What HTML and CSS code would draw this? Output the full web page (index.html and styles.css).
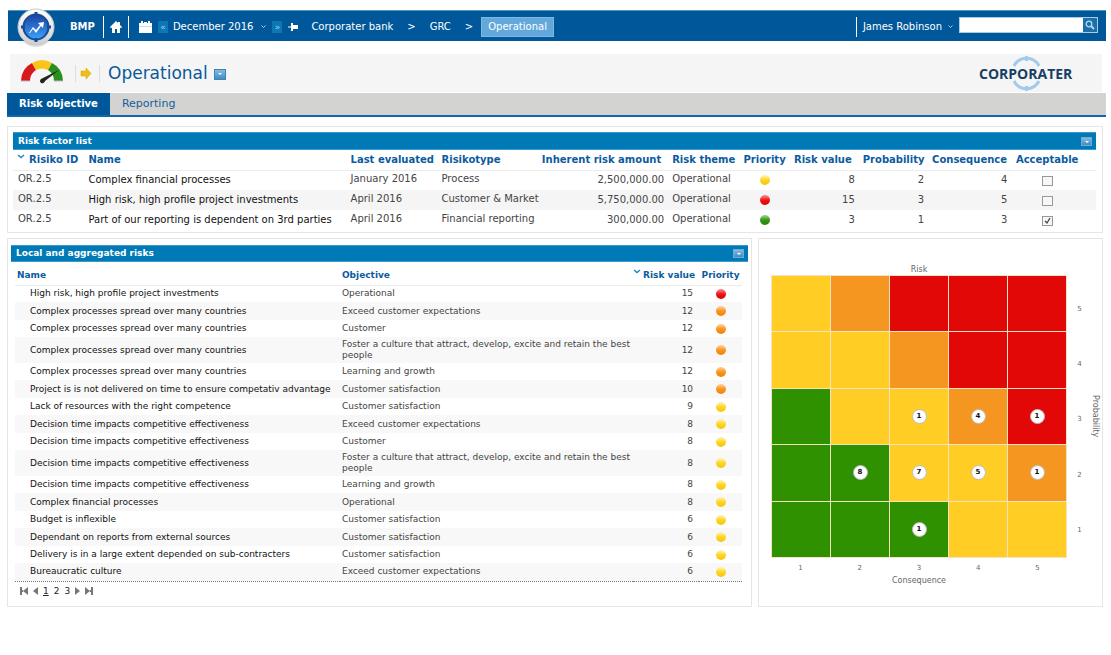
FILE: index.html
```html
<!DOCTYPE html>
<html lang="en">
<head>
<meta charset="utf-8">
<meta name="viewport" content="width=device-width, initial-scale=1">
<title>Operational</title>
<link rel="stylesheet" href="styles.css">
</head>
<body>
<header class="topbar">
  <a href="#" class="brand" aria-label="Start">
    <svg width="40" height="40" viewBox="0 0 40 40">
      <defs>
        <linearGradient id="ring" x1="0" y1="0" x2="0" y2="1"><stop offset="0" stop-color="#fff"/><stop offset="1" stop-color="#cfcfcf"/></linearGradient>
        <linearGradient id="ball" x1="0" y1="0" x2="0" y2="1"><stop offset="0" stop-color="#1743a4"/><stop offset="1" stop-color="#3fa2fa"/></linearGradient>
      </defs>
      <circle cx="20" cy="22" r="18" fill="#000" opacity=".12"/>
      <circle cx="20" cy="20" r="18" fill="url(#ring)" stroke="#c4c8cc"/>
      <circle cx="20" cy="20" r="12.500" fill="url(#ball)" stroke="#174c94" stroke-width="2"/>
      <path d="M20 5v4M20 31v4M5 20h4M31 20h4" stroke="#174c94" stroke-width="3"/>
      <path d="M13 26l4-6 3 3 4-5-2-2 6-1-1 6-2-2-5 7-3-4-3 4z" fill="#fff"/>
    </svg>
  </a>
  <a href="#" class="bmp">BMP</a>
  <a href="#" class="home" aria-label="Home">
    <svg width="12" height="12" viewBox="0 0 12 12"><path d="M6 0L0 6l1 1.200L2 6.500V12h3V8h2v4h3V6.500l1 .7L12 6l-2-2V1H8v1z" fill="#fff"/></svg>
  </a>
  <div class="period">
    <svg width="13" height="12" viewBox="0 0 13 12"><path d="M0 2h2V0h2v2h1V1h3v1h1V0h2v2h2v3H0zM0 6h13v6H0z" fill="#fff"/><path d="M0 5.500h13" stroke="#c8dcec"/></svg>
    <button class="step">«</button>
    <button class="month">December 2016
      <svg width="5" height="4" viewBox="0 0 5 4"><path d="M.5.5l2 2 2-2" fill="none" stroke="#a8cbe6"/></svg>
    </button>
    <button class="step">»</button>
    <svg width="11" height="8" viewBox="0 0 11 8"><path d="M0 4h4" stroke="#fff"/><path d="M3 0h2v2h5v4H5v2H3z" fill="#fff"/></svg>
  </div>
  <nav class="crumbs" aria-label="Breadcrumb">
    <a href="#">Corporater bank</a><span>&gt;</span><a href="#">GRC</a><span>&gt;</span><a href="#" class="current">Operational</a>
  </nav>
  <div class="account">
    <button class="user">James Robinson
      <svg width="5" height="4" viewBox="0 0 5 4"><path d="M.5.5l2 2 2-2" fill="none" stroke="#a8cbe6"/></svg>
    </button>
    <form class="search">
      <input type="text" aria-label="Search">
      <button type="button" aria-label="Search">
        <svg width="10" height="10" viewBox="0 0 10 10"><circle cx="4" cy="4" r="2.800" fill="none" stroke="#b5d8ee" stroke-width="1.300"/><path d="M6 6l3 3" stroke="#b5d8ee" stroke-width="1.800"/></svg>
      </button>
    </form>
  </div>
</header>

<section class="titlebar">
  <svg class="gauge" width="44" height="26" viewBox="0 0 44 26">
    <path d="M1 22A20.500 20.500 0 0 1 12 4l4 7A13 13 0 0 0 10 22z" fill="#d8191c"/>
    <path d="M12 4Q22-2 32 4l-4 7q-6-3-12 0z" fill="#fbc419"/>
    <path d="M32 4A20.500 20.500 0 0 1 43 22h-9a13 13 0 0 0-6-11z" fill="#2a8f1c"/>
    <path d="M1 22h9M34 22h9" stroke="#bbb"/>
    <path d="M39 11L21 20q-2 2 0 4 3 1 4-2z" fill="#222"/>
  </svg>
  <div class="step-arrow">
    <svg width="12" height="13" viewBox="0 0 12 13"><path d="M1 4h5V1l5 5.500-5 5.500V9H1z" fill="#efbd17" stroke="#dba70c" stroke-width=".6"/></svg>
  </div>
  <h1>Operational</h1>
  <button class="drop large" aria-label="Page menu"></button>
  <svg class="logo" width="98" height="38" viewBox="0 0 98 38">
    <g fill="none" stroke="#a3c9ec" stroke-width="3"><path d="M36 12A14 14 0 0 1 61 12M36 27A14 14 0 0 0 61 27M48.500 2v5M48.500 32v5"/></g>
    <text x="1" y="25">CORPORATER</text>
  </svg>
</section>

<nav class="tabs">
  <a href="#" class="active">Risk objective</a>
  <a href="#">Reporting</a>
</nav>

<main>
<section class="panel factors">
  <div class="bar"><h2>Risk factor list</h2><button class="drop" aria-label="Risk factor list menu"></button></div>
  <table>
    <colgroup><col class="f-id"><col class="f-name"><col class="f-date"><col class="f-type"><col class="f-amount"><col class="f-theme"><col class="f-prio"><col class="f-value"><col class="f-prob"><col class="f-cons"><col class="f-acc"><col></colgroup>
    <thead><tr>
      <th><svg class="sort" width="8" height="6" viewBox="0 0 8 6"><path d="M1 1l3 2.500L7 1" fill="none" stroke="#2487c4" stroke-width="1.500"/></svg>Risiko ID</th><th>Name</th><th>Last evaluated</th><th>Risikotype</th><th class="num">Inherent risk amount</th><th>Risk theme</th><th class="mid">Priority</th><th class="num">Risk value</th><th class="num">Probability</th><th class="num">Consequence</th><th class="mid">Acceptable</th><th></th>
    </tr></thead>
    <tbody>
      <tr><td class="up">OR.2.5</td><td class="name">Complex financial processes</td><td class="up">January 2016</td><td class="up">Process</td><td class="num">2,500,000.00</td><td class="up">Operational</td><td class="mid"><i class="orb yellow"></i></td><td class="num">8</td><td class="num">2</td><td class="num">4</td><td class="mid"><input type="checkbox" aria-label="Acceptable: Complex financial processes"></td><td></td></tr>
      <tr><td class="up">OR.2.5</td><td class="name">High risk, high profile project investments</td><td class="up">April 2016</td><td class="up">Customer &amp; Market</td><td class="num">5,750,000.00</td><td class="up">Operational</td><td class="mid"><i class="orb red"></i></td><td class="num">15</td><td class="num">3</td><td class="num">5</td><td class="mid"><input type="checkbox" aria-label="Acceptable: High risk, high profile project investments"></td><td></td></tr>
      <tr><td class="up">OR.2.5</td><td class="name">Part of our reporting is dependent on 3rd parties</td><td class="up">April 2016</td><td class="up">Financial reporting</td><td class="num">300,000.00</td><td class="up">Operational</td><td class="mid"><i class="orb green"></i></td><td class="num">3</td><td class="num">1</td><td class="num">3</td><td class="mid"><input type="checkbox" checked aria-label="Acceptable: Part of our reporting is dependent on 3rd parties"></td><td></td></tr>
    </tbody>
  </table>
</section>

<div class="columns">
<section class="panel risks">
  <div class="bar"><h2>Local and aggregated risks</h2><button class="drop" aria-label="Local and aggregated risks menu"></button></div>
  <table>
    <colgroup><col class="r-name"><col class="r-obj"><col class="r-value"><col></colgroup>
    <thead><tr><th>Name</th><th>Objective</th><th class="num"><svg class="sort" width="8" height="6" viewBox="0 0 8 6"><path d="M1 1l3 2.500L7 1" fill="none" stroke="#2487c4" stroke-width="1.500"/></svg>Risk value</th><th class="mid">Priority</th></tr></thead>
    <tbody>
      <tr><td class="name">High risk, high profile project investments</td><td>Operational</td><td class="num">15</td><td class="mid"><i class="orb red"></i></td></tr>
      <tr><td class="name">Complex processes spread over many countries</td><td>Exceed customer expectations</td><td class="num">12</td><td class="mid"><i class="orb orange"></i></td></tr>
      <tr><td class="name">Complex processes spread over many countries</td><td>Customer</td><td class="num">12</td><td class="mid"><i class="orb orange"></i></td></tr>
      <tr class="tall"><td class="name">Complex processes spread over many countries</td><td>Foster a culture that attract, develop, excite and retain the best people</td><td class="num">12</td><td class="mid"><i class="orb orange"></i></td></tr>
      <tr><td class="name">Complex processes spread over many countries</td><td>Learning and growth</td><td class="num">12</td><td class="mid"><i class="orb orange"></i></td></tr>
      <tr><td class="name">Project is is not delivered on time to ensure competativ advantage</td><td>Customer satisfaction</td><td class="num">10</td><td class="mid"><i class="orb orange"></i></td></tr>
      <tr><td class="name">Lack of resources with the right competence</td><td>Customer satisfaction</td><td class="num">9</td><td class="mid"><i class="orb yellow"></i></td></tr>
      <tr><td class="name">Decision time impacts competitive effectiveness</td><td>Exceed customer expectations</td><td class="num">8</td><td class="mid"><i class="orb yellow"></i></td></tr>
      <tr><td class="name">Decision time impacts competitive effectiveness</td><td>Customer</td><td class="num">8</td><td class="mid"><i class="orb yellow"></i></td></tr>
      <tr class="tall"><td class="name">Decision time impacts competitive effectiveness</td><td>Foster a culture that attract, develop, excite and retain the best people</td><td class="num">8</td><td class="mid"><i class="orb yellow"></i></td></tr>
      <tr><td class="name">Decision time impacts competitive effectiveness</td><td>Learning and growth</td><td class="num">8</td><td class="mid"><i class="orb yellow"></i></td></tr>
      <tr><td class="name">Complex financial processes</td><td>Operational</td><td class="num">8</td><td class="mid"><i class="orb yellow"></i></td></tr>
      <tr><td class="name">Budget is inflexible</td><td>Customer satisfaction</td><td class="num">6</td><td class="mid"><i class="orb yellow"></i></td></tr>
      <tr><td class="name">Dependant on reports from external sources</td><td>Customer satisfaction</td><td class="num">6</td><td class="mid"><i class="orb yellow"></i></td></tr>
      <tr><td class="name">Delivery is in a large extent depended on sub-contracters</td><td>Customer satisfaction</td><td class="num">6</td><td class="mid"><i class="orb yellow"></i></td></tr>
      <tr><td class="name">Bureaucratic culture</td><td>Exceed customer expectations</td><td class="num">6</td><td class="mid"><i class="orb yellow"></i></td></tr>
    </tbody>
  </table>
  <nav class="pager" aria-label="Pages">
    <a href="#" aria-label="First"><svg width="8" height="8" viewBox="0 0 8 8"><path d="M0 0h2v8H0zM8 0v8L3 4zM2 3h1v2H2z" fill="#777"/></svg></a>
    <a href="#" aria-label="Previous"><svg width="5" height="8" viewBox="0 0 5 8"><path d="M5 0v8L0 4z" fill="#777"/></svg></a>
    <a href="#" class="on">1</a><a href="#">2</a><a href="#">3</a>
    <a href="#" aria-label="Next"><svg width="5" height="8" viewBox="0 0 5 8"><path d="M0 0v8l5-4z" fill="#777"/></svg></a>
    <a href="#" aria-label="Last"><svg width="8" height="8" viewBox="0 0 8 8"><path d="M6 0h2v8H6zM0 0v8l5-4zM5 3h1v2H5z" fill="#777"/></svg></a>
  </nav>
</section>

<section class="panel matrix">
  <h3>Risk</h3>
  <div class="grid">
    <div class="y"></div><div class="o"></div><div class="r"></div><div class="r"></div><div class="r"></div>
    <div class="y"></div><div class="y"></div><div class="o"></div><div class="r"></div><div class="r"></div>
    <div class="g"></div><div class="y"></div><div class="y"><b>1</b></div><div class="o"><b>4</b></div><div class="r"><b>1</b></div>
    <div class="g"></div><div class="g"><b>8</b></div><div class="y"><b>7</b></div><div class="y"><b>5</b></div><div class="o"><b>1</b></div>
    <div class="g"></div><div class="g"></div><div class="g"><b>1</b></div><div class="y"></div><div class="y"></div>
  </div>
  <div class="rows"><span>5</span><span>4</span><span>3</span><span>2</span><span>1</span></div>
  <div class="ylabel">Probability</div>
  <div class="cols"><span>1</span><span>2</span><span>3</span><span>4</span><span>5</span></div>
  <div class="xlabel">Consequence</div>
</section>
</div>
</main>
</body>
</html>
```

FILE: styles.css
```css
* { box-sizing: border-box; }
body {
  margin: 0;
  padding: 10px 5px 16px 7px;
  background: #fff;
  color: #444;
  font: 10px/12px "DejaVu Sans", Verdana, sans-serif;
}
a { color: inherit; text-decoration: none; }
button { border: 0; padding: 0; background: none; color: inherit; font: inherit; cursor: pointer; }
svg { display: block; flex: none; }
h1, h2, h3 { margin: 0; font-weight: normal; }

/* Top bar */
.topbar {
  display: flex;
  align-items: center;
  height: 31px;
  margin-left: 1px;
  padding: 2px 8px 0;
  background: #00589a;
  border-top: 1px solid #4f93c4;
  color: #fff;
  white-space: nowrap;
}
.brand { margin: 0 14px 0 0; }
.bmp { font-weight: bold; }
.home { margin: 0 8px; padding: 5px 6px; border: solid #fff; border-width: 0 1px; }
.period { display: flex; align-items: center; margin-left: 2px; }
.step { width: 10px; height: 12px; margin: 0 5px 0 6px; background: #0b78b4; color: #9ccdec; font-size: 9px; line-height: 10px; }
.month, .user { display: flex; align-items: center; gap: 8px; }
.month + .step { margin-right: 6px; }
.crumbs { display: flex; align-items: center; margin-left: 12px; }
.crumbs span { margin: 0 14px; }
.crumbs span:last-of-type { margin-right: 8px; }
.current { padding: 3px 6px; background: #63a8da; border: 1px solid #7db8e2; }
.account { display: flex; align-items: center; margin-left: auto; }
.user { gap: 6px; height: 20px; padding: 0 6px; border-left: 1px solid #fff; }
.search { display: flex; width: 139px; height: 16px; margin-bottom: 5px; border: 1px solid #a9cbe3; }
.search input { flex: 1; min-width: 0; border: 0; padding: 0 4px; background: #fff; font: inherit; }
.search button { padding: 0 2px; background: #1b70ac; }

/* Title */
.titlebar { display: flex; align-items: center; height: 38px; margin: 13px 4px 0 3px; padding: 0 26px 0 10px; background: #f5f5f5; }
.gauge { margin-bottom: 2px; }
.step-arrow { margin: 0 8px 0 11px; padding: 2px 7px 2px 4px; border: solid #ddd; border-width: 0 1px; }
h1 { color: #0b589a; font-size: 17px; line-height: 22px; }
.logo { margin-left: auto; }
.logo text { fill: #173f66; font: bold 14px "Open Sans", sans-serif; }
.drop { position: relative; width: 11px; height: 9px; background: linear-gradient(#85b9de, #3f8ec5); border: 1px solid #6fabd6; }
.drop::after { content: ""; position: absolute; left: 3px; top: 3px; border: solid transparent; border-width: 2px 2px 0; border-top-color: #fff; }
.drop.large { width: 12px; height: 11px; margin: 2px 0 0 6px; border-color: #3c83b8; }

/* Tabs */
.tabs { display: flex; height: 24px; margin-top: 1px; background: #d3d3d1; border-bottom: 2px solid #1467a5; color: #175f9c; font-size: 11px; line-height: 21px; }
.tabs a { padding: 0 12px; }
.tabs .active { background: #00589a; color: #fff; font-size: 10px; font-weight: bold; }

/* Panels */
main { padding: 9px 3px 0 0; }
.panel { border: 1px solid #e6e6e6; }
.factors { padding: 5px 6px 2px 5px; }
.bar { display: flex; align-items: center; justify-content: space-between; height: 18px; padding: 0 4px 0 5px; background: #007ab7; border: 1px solid #3a9acb; border-width: 1px 0; color: #fff; }
h2 { font-size: 9px; font-weight: bold; }
table { width: 100%; border-collapse: collapse; table-layout: fixed; }
th, td { padding: 0 4px; text-align: left; vertical-align: middle; }
th { padding-right: 7px; color: #0c5b9f; white-space: nowrap; border-bottom: 1px solid #ececec; }
.num { text-align: right; }
.mid, th.mid { padding: 0; text-align: center; }
.name { color: #111; }
.sort { display: inline-block; margin-right: 4px; vertical-align: 3px; }
tbody tr:nth-child(even) { background: #f5f5f5; }

.factors th { height: 20px; }
.factors td { height: 20px; white-space: nowrap; }
.factors td:first-child { padding-left: 5px; }
.factors td.up { padding-bottom: 3px; }
.f-id { width: 6.6%; }
.f-name { width: 24.2%; }
.f-date { width: 8.4%; }
.f-type { width: 9.2%; }
.f-amount { width: 12.1%; }
.f-theme { width: 6.6%; }
.f-prio { width: 4.6%; }
.f-value { width: 6.4%; }
.f-prob { width: 6.4%; }
.f-cons { width: 7.7%; }
.f-acc { width: 6.6%; }

.orb { display: block; width: 10px; height: 10px; margin: 0 auto; border-radius: 50%; }
.red { background: linear-gradient(#f78080 10%, #ef1515 50%, #dc0000); }
.orange { background: linear-gradient(#ffc98a 10%, #fb9420 50%, #ee8408); }
.yellow { background: linear-gradient(#fff0a0 10%, #ffd521 50%, #f4c60a); }
.green { background: linear-gradient(#8fd07c 10%, #349715 50%, #278207); }
input[type="checkbox"] { display: block; appearance: none; width: 11px; height: 10px; margin: 1px auto 0; border: 1px solid #999; background: #f7f7f7; }
input[type="checkbox"]:checked { background: #f7f7f7 url("data:image/svg+xml,%3Csvg xmlns='http://www.w3.org/2000/svg' viewBox='0 0 9 8'%3E%3Cpath d='M2 4l2 2 3-5' fill='none' stroke='%23444' stroke-width='1.3'/%3E%3C/svg%3E") center / 9px 8px no-repeat; }

.columns { display: grid; grid-template-columns: minmax(0, 745fr) minmax(0, 345fr); gap: 6px; margin-top: 5px; }
.risks { padding: 6px 3px 9px; font-size: 9px; line-height: 11px; }
.risks table { width: calc(100% - 10px); margin-left: 4px; border-bottom: 1px dotted #777; }
.risks .bar { height: 17px; }
.risks th { height: 23px; padding: 4px 4px 0 2px; }
.risks th.num { padding-left: 0; }
.risks th.mid { padding: 4px 0 0; }
.risks td { height: 17px; padding: 0 0 0 2px; }
.risks td.num { padding-right: 6px; }
.risks tr:nth-child(even) td { height: 18px; }
.risks tr.tall td { height: 26px; }
.risks td.name { padding-left: 15px; }
.risks tbody tr:nth-child(even) { background: #f8f8f8; }
.risks td.mid { padding: 0; }
.risks .sort { margin-right: 2px; }
.r-name { width: 44.7%; }
.r-obj { width: 40.3%; }
.r-value { width: 9.1%; }
.pager { display: flex; align-items: center; gap: 5px; padding: 4px 9px 0; color: #222; }
.on { text-decoration: underline; }

/* Risk matrix */
.matrix {
  display: grid;
  grid-template-columns: 1fr 21px 14px;
  grid-template-rows: 11px 283px 21px 10px;
  align-content: start;
  padding: 25px 0 0 12px;
  color: #666;
  font-size: 8px;
  line-height: 11px;
  text-align: center;
}
.matrix h3 { font-size: 8px; }
.grid { grid-column: 1; display: grid; grid-template-columns: repeat(5, 1fr); grid-template-rows: repeat(5, 1fr); gap: 1px; padding: 1px; background: #f3e3c4; }
.grid div { display: flex; align-items: center; justify-content: center; }
.y { background: #ffcd24; }
.o { background: #f59620; }
.r { background: #e30808; }
.g { background: #2f9000; }
.grid b { width: 15px; height: 15px; border: 1px solid #bbb; border-radius: 50%; background: #fff; color: #111; font-size: 7px; line-height: 13px; }
.rows { display: grid; grid-template-rows: repeat(5, 1fr); align-items: center; padding: 7px 0 0 4px; font-size: 7px; }
.ylabel { writing-mode: vertical-rl; padding-right: 2px; line-height: 10px; }
.cols { grid-column: 1; display: grid; grid-template-columns: repeat(5, 1fr); align-items: center; font-size: 7px; }
.xlabel { grid-column: 1; line-height: 4px; }
```
